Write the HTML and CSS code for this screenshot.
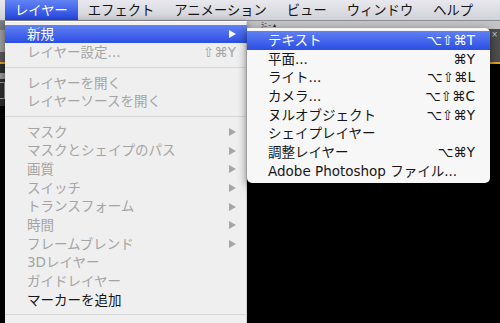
FILE: index.html
```html
<!DOCTYPE html>
<html lang="ja">
<head>
<meta charset="utf-8">
<title>レイヤー</title>
<link rel="stylesheet" href="styles.css">
</head>
<body>
<div class="screen">
  <nav class="menubar">
    <span class="mb-item active">レイヤー</span>
    <span class="mb-item">エフェクト</span>
    <span class="mb-item">アニメーション</span>
    <span class="mb-item">ビュー</span>
    <span class="mb-item">ウィンドウ</span>
    <span class="mb-item">ヘルプ</span>
  </nav>
  <div class="workspace">
    <div class="panel-top">
      <div class="edge-left">
        <div class="edge-a"></div>
        <div class="edge-b"></div>
        <div class="edge-c"></div>
      </div>
      <div class="panel-mid">
        <div class="panel-head"><span class="tiny">ﾗﾆ ｰ ▴</span></div>
        <div class="panel-body"><span class="close">×</span></div>
      </div>
    </div>
    <div class="accent"></div>
    <div class="viewer">
      <div class="edge-tools">
        <div class="tool-a"></div>
        <div class="tool-b"></div>
      </div>
    </div>
  </div>

  <div class="menu main-menu">
    <div class="item hl"><span class="label">新規</span><span class="arrow"></span></div>
    <div class="item dis"><span class="label">レイヤー設定...</span><span class="key">⇧⌘Y</span></div>
    <div class="sep"></div>
    <div class="item dis"><span class="label">レイヤーを開く</span></div>
    <div class="item dis"><span class="label">レイヤーソースを開く</span></div>
    <div class="sep"></div>
    <div class="item dis"><span class="label">マスク</span><span class="arrow"></span></div>
    <div class="item dis"><span class="label">マスクとシェイプのパス</span><span class="arrow"></span></div>
    <div class="item dis"><span class="label">画質</span><span class="arrow"></span></div>
    <div class="item dis"><span class="label">スイッチ</span><span class="arrow"></span></div>
    <div class="item dis"><span class="label">トランスフォーム</span><span class="arrow"></span></div>
    <div class="item dis"><span class="label">時間</span><span class="arrow"></span></div>
    <div class="item dis"><span class="label">フレームブレンド</span><span class="arrow"></span></div>
    <div class="item dis"><span class="label">3Dレイヤー</span></div>
    <div class="item dis"><span class="label">ガイドレイヤー</span></div>
    <div class="item"><span class="label">マーカーを追加</span></div>
    <div class="sep"></div>
  </div>

  <div class="menu sub-menu">
    <div class="item hl"><span class="label">テキスト</span><span class="key">⌥⇧⌘T</span></div>
    <div class="item"><span class="label">平面...</span><span class="key">⌘Y</span></div>
    <div class="item"><span class="label">ライト...</span><span class="key">⌥⇧⌘L</span></div>
    <div class="item"><span class="label">カメラ...</span><span class="key">⌥⇧⌘C</span></div>
    <div class="item"><span class="label">ヌルオブジェクト</span><span class="key">⌥⇧⌘Y</span></div>
    <div class="item"><span class="label">シェイプレイヤー</span></div>
    <div class="item"><span class="label">調整レイヤー</span><span class="key">⌥⌘Y</span></div>
    <div class="item"><span class="label">Adobe Photoshop ファイル...</span></div>
  </div>
</div>
</body>
</html>
```

FILE: styles.css
```css
* {
  box-sizing: border-box;
  margin: 0;
  padding: 0;
}

html, body {
  width: 500px;
  height: 323px;
  overflow: hidden;
  background: #000;
}

body {
  font-family: "Noto Sans CJK JP", "Noto Sans", sans-serif;
}

.screen {
  position: relative;
  width: 500px;
  height: 323px;
  display: flex;
  flex-direction: column;
}

/* ---------- menubar ---------- */
.menubar {
  height: 21px;
  flex: none;
  display: flex;
  padding-left: 5px;
  background: linear-gradient(#e8e8ee, #d1d1d9);
  border-bottom: 1px solid #8e8e96;
  font-size: 13.3px;
  line-height: 20px;
  color: #151515;
}

.mb-item {
  height: 20px;
  padding: 0 10px;
  white-space: nowrap;
}

.mb-item.active {
  background: linear-gradient(#6383f4, #2446e0);
  color: #fff;
}

/* ---------- background workspace ---------- */
.workspace {
  flex: 1;
  display: flex;
  flex-direction: column;
}

.panel-top {
  height: 41px;
  display: flex;
}

.edge-left {
  width: 5px;
  display: flex;
  flex-direction: column;
}

.edge-a { height: 9px; background: #7e7e7e; }
.edge-b { height: 22px; background: #a0a0a0; }
.edge-c { flex: 1; background: #5a5a5a; }

.panel-mid {
  flex: 1;
  display: flex;
  flex-direction: column;
}

.panel-head {
  height: 8px;
  background: #c4c4c4;
  font-size: 6px;
  line-height: 8px;
  color: #222;
  padding-left: 256px;
  overflow: hidden;
}

.panel-body {
  flex: 1;
  background: #4e4e4e;
  display: flex;
  justify-content: flex-end;
  padding-right: 2px;
}

.close {
  font-family: "DejaVu Sans", sans-serif;
  font-size: 8px;
  line-height: 12px;
  color: #cfcfcf;
}

.accent {
  height: 2px;
  background: #e3a12c;
}

.viewer {
  flex: 1;
  background: #000;
  display: flex;
}

.edge-tools {
  width: 5px;
  background: #2e2e2e;
  height: 42px;
  padding-top: 9px;
  display: flex;
  flex-direction: column;
  gap: 3px;
}

.tool-a { height: 6px; background: #9a9a9a; }
.tool-b { height: 17px; border: 1px solid #9a9a9a; border-left: none; }

/* ---------- menus ---------- */
.menu {
  position: absolute;
  font-family: "DejaVu Sans", "Noto Sans CJK JP", sans-serif;
  font-size: 13.5px;
  color: #161616;
}

.main-menu {
  top: 21px;
  left: 5px;
  width: 242px;
  height: 310px;
  padding-top: 3.7px;
  background: #efefef;
  box-shadow: inset 0 1px #ffffff, inset -1px 0 #d2d2d2, 0 2px 8px rgba(0, 0, 0, 0.5);
}

.main-menu .item {
  padding: 0 11px 0 22px;
}

.sub-menu {
  top: 27.5px;
  left: 247px;
  width: 243px;
  padding: 3.6px 0 3px;
  background: #f7f7f7;
  border-radius: 0 5px 5px 5px;
  box-shadow: 0 3px 10px rgba(0, 0, 0, 0.55);
  z-index: 2;
}

.sub-menu .item {
  padding: 0 15px 0 21px;
}

.item {
  height: 18.67px;
  line-height: 18.67px;
  display: flex;
  align-items: center;
  justify-content: space-between;
  white-space: nowrap;
}

.label {
  font-size: 13.5px;
}

.item.dis {
  color: #a4a4a4;
}

.item.hl {
  background: linear-gradient(#6181f3, #2b4ee4);
  color: #fff;
}

.key {
  font-family: "DejaVu Sans", sans-serif;
  font-size: 13.5px;
}

.arrow {
  width: 0;
  height: 0;
  border-left: 7px solid #a6a6a6;
  border-top: 4.5px solid transparent;
  border-bottom: 4.5px solid transparent;
}

.item.hl .arrow {
  border-left-color: #fff;
}

.sep {
  height: 1px;
  margin: 5.3px 0 5.37px;
  background: #d6d6d6;
}
```
